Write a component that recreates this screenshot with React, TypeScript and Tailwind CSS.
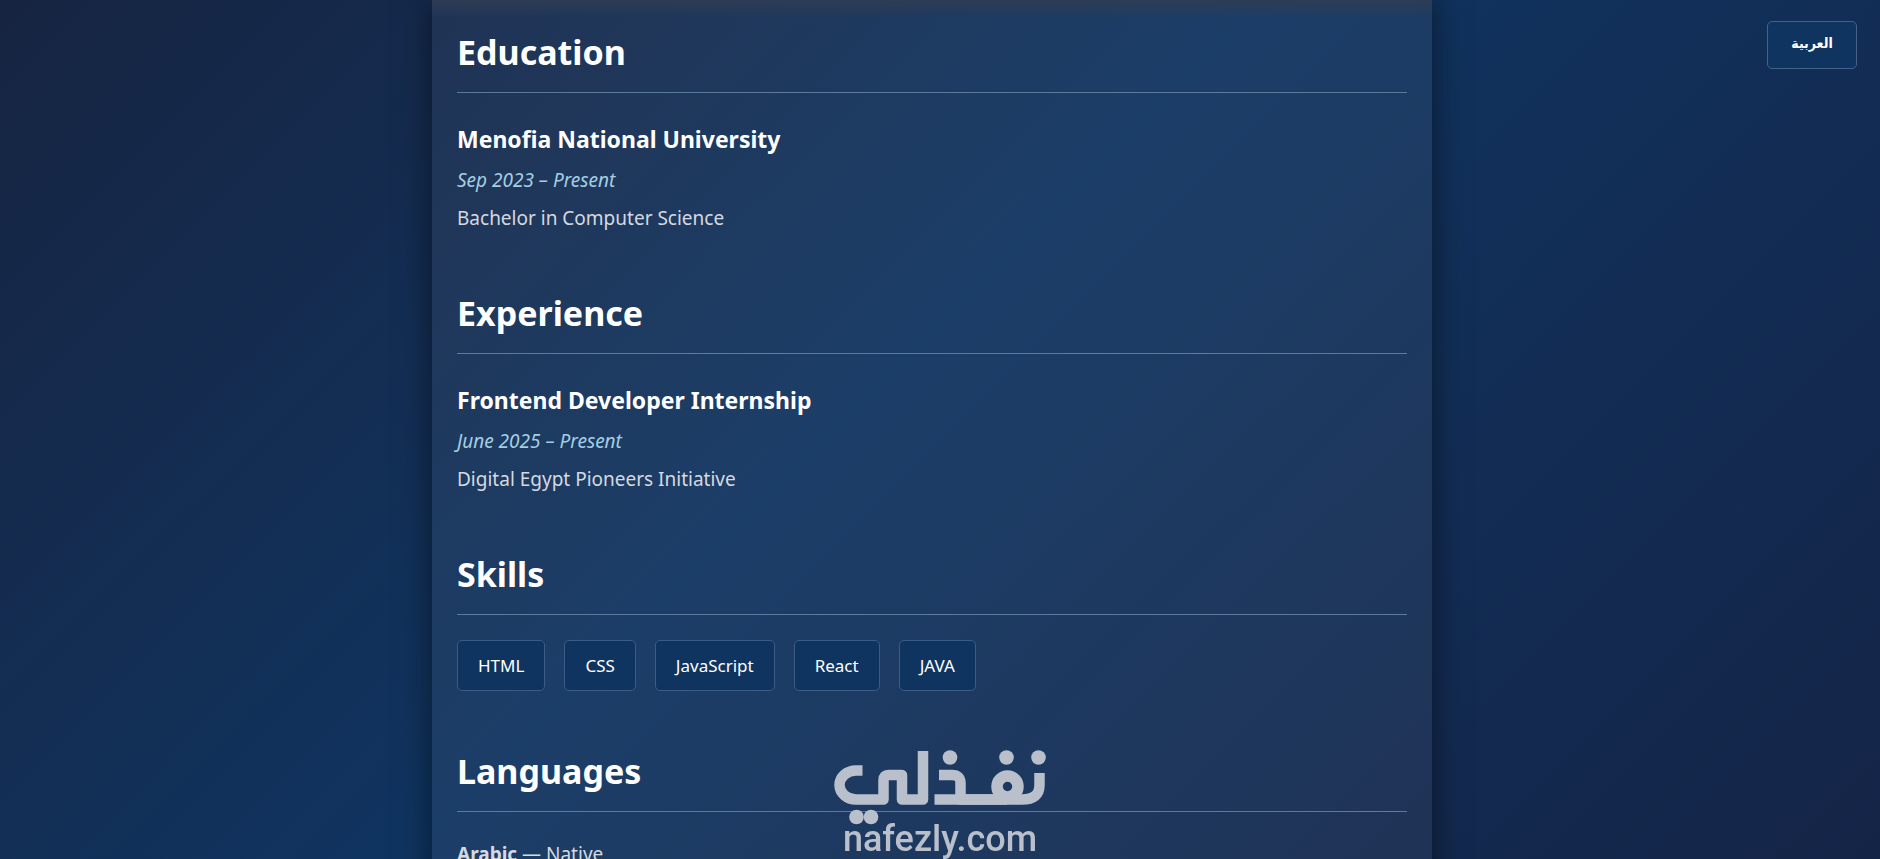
import React from "react";

type Entry = { section: string; title: string; period: string; detail: string };

const entries: Entry[] = [
  { section: "Education", title: "Menofia National University", period: "Sep 2023 – Present", detail: "Bachelor in Computer Science" },
  { section: "Experience", title: "Frontend Developer Internship", period: "June 2025 – Present", detail: "Digital Egypt Pioneers Initiative" },
];

const skills = ["HTML", "CSS", "JavaScript", "React", "JAVA"];

function Heading({ children }: { children: React.ReactNode }) {
  return (
    <h2 className="mb-[25px] border-b border-[#5b7a9c] pb-[18px] text-[34px] leading-[44px] font-bold text-white">{children}</h2>
  );
}

function Watermark() {
  return (
    <div className="pointer-events-none fixed inset-x-0 bottom-0 flex justify-center">
      <svg viewBox="0 0 280 129" className="h-[129px] w-[280px] text-[#b9c0cb]" role="img" aria-label="نفذلي">
        <g fill="none" stroke="currentColor" strokeWidth="10.5" strokeLinejoin="round">
          <path d="M62.5 40.500H56A16.500 14.500 0 0 0 56 69.500H83.500V50Q83.500 45 88.500 45H102V69.500H123V21" />
          <path d="M139 45H152Q160.500 45 160.500 53V69.500H207" />
          <path d="M134.500 69.500H222Q239.500 69.500 239.500 55V43" />
          <circle cx="207.500" cy="56.500" r="10.500" strokeWidth="11.500" />
        </g>
        <g fill="currentColor">
          <circle cx="150" cy="27.500" r="7.300" />
          <circle cx="206.500" cy="27.500" r="7.300" />
          <circle cx="238.500" cy="27.500" r="7.300" />
          <circle cx="71" cy="87" r="7.300" />
          <circle cx="56.500" cy="87" r="7.300" />
        </g>
        <text x="140" y="121" textAnchor="middle" fill="currentColor" fontSize="36" fontWeight="500" fontFamily="Roboto, sans-serif">nafezly.com</text>
      </svg>
    </div>
  );
}

export default function App() {
  return (
    <div className="h-screen overflow-hidden bg-linear-135 from-[#162441] via-[#0f3460] via-46% to-[#142447] pr-4 font-['Noto_Sans','Open_Sans',sans-serif]">
      <button
        type="button"
        lang="ar"
        className="fixed top-[21px] right-[23px] h-12 w-[90px] rounded-[5px] border border-[#45628a] bg-[#0f3460] pb-1 text-[14px] font-bold text-white font-['DejaVu_Sans_Condensed','DejaVu_Sans',sans-serif]"
      >
        العربية
      </button>

      <main className="mx-auto w-full max-w-[1000px] bg-[#ffffff0d] px-[25px] shadow-[0_0_30px_rgba(0,0,0,0.5)]">
        <div className="-mx-[25px] h-[30px] bg-linear-to-b from-[#2e3c54] to-transparent to-60%" />
        {entries.map((e) => (
          <section key={e.section} className="mb-[58px]">
            <Heading>{e.section}</Heading>
            <h3 className="mb-[5px] text-[23px] leading-[42px] font-bold text-white">{e.title}</h3>
            <p className="mb-2 text-[19px] leading-[30px] text-[#a3cfe3] italic">{e.period}</p>
            <p className="text-[19px] leading-[30px] text-[#d5d9e0]">{e.detail}</p>
          </section>
        ))}
        <section className="mb-[58px]">
          <Heading>Skills</Heading>
          <ul className="flex flex-wrap gap-[19px]">
            {skills.map((s) => (
              <li key={s} className="rounded-[5px] border border-[#3a5c86] bg-[#0f3460] px-5 py-3 text-[17px] leading-[25px] text-white">{s}</li>
            ))}
          </ul>
        </section>
        <section>
          <Heading>Languages</Heading>
          <p className="pb-10 text-[19px] leading-[34px] text-[#d5d9e0]">
            <strong>Arabic</strong> — Native
          </p>
        </section>
      </main>
      <Watermark />
    </div>
  );
}
